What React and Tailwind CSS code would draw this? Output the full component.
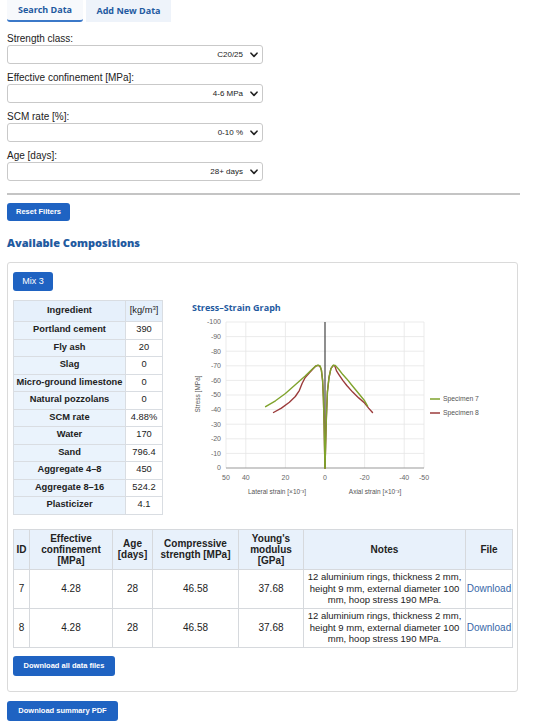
import React from "react";

const BLUE = "#1f63c2";

function Chevron() {
    return (
        <svg width="8" height="6" viewBox="0 0 8 6" className="ml-[7px]">
            <path d="M1 1.2 L4 4.4 L7 1.2" fill="none" stroke="#222" strokeWidth="1.6" strokeLinecap="round" strokeLinejoin="round" />
        </svg>
    );
}

function FilterSelect({ label, value }) {
    return (
        <div className="mb-[7px]">
            <div className="h-[13px] text-[10px] leading-[13px] text-[#222]">{label}</div>
            <div className="flex h-[19px] w-[256px] items-center justify-end rounded-[3px] border border-[#c9c9c9] bg-white pr-[4px] text-[8px] text-[#222]">
                <span>{value}</span>
                <Chevron />
            </div>
        </div>
    );
}

const ingredients = [
    ["Portland cement", "390"],
    ["Fly ash", "20"],
    ["Slag", "0"],
    ["Micro-ground limestone", "0"],
    ["Natural pozzolans", "0"],
    ["SCM rate", "4.88%"],
    ["Water", "170"],
    ["Sand", "796.4"],
    ["Aggregate 4–8", "450"],
    ["Aggregate 8–16", "524.2"],
    ["Plasticizer", "4.1"],
];

const results = [
    { id: "7", conf: "4.28", age: "28", fc: "46.58", e: "37.68" },
    { id: "8", conf: "4.28", age: "28", fc: "46.58", e: "37.68" },
];

// chart mapping (svg coords)
const X = (v) => 140 - 1.98 * v;
const Y = (s) => 154 - 1.46 * s;
const pts = (arr) => arr.map(([v, s]) => `${X(v).toFixed(1)},${Y(s).toFixed(1)}`).join(" ");

const greenLat = [[30, 42], [25, 46], [20, 51], [15, 57], [10, 63], [7, 67], [5, 69.5], [3.5, 70.5], [2.5, 70], [1.8, 67], [1.2, 60], [0.8, 48], [0.45, 30], [0.2, 12], [0, 0]];
const redLat = [[26, 38], [22, 41], [18, 45], [15, 49], [13, 53], [11.5, 58], [10, 62], [8, 65], [6, 68], [4.5, 70], [3.5, 70.3], [2.5, 69.5], [1.8, 67], [1.2, 60], [0.8, 48], [0.45, 30], [0.2, 12], [0, 0]];
const greenAx = [[0, 0], [-0.3, 15], [-0.7, 35], [-1.2, 52], [-2, 62], [-3, 68], [-4.2, 70.5], [-5.2, 70.3], [-7, 67.5], [-9, 64], [-11, 61], [-14, 56], [-17, 51], [-20, 46], [-21.5, 42.5]];
const redAx = [[0, 0], [-0.3, 15], [-0.7, 35], [-1.2, 52], [-2, 62], [-3, 68], [-4.2, 70.3], [-5, 69.8], [-5.8, 66.5], [-7, 64], [-9, 60], [-11, 56.5], [-14, 52], [-17, 48], [-20, 44.5], [-22, 41], [-24, 38]];

function StressStrainChart() {
    const grid = "#e6e6e6";
    const tick = "#666";
    return (
        <svg width="320" height="190" viewBox="0 0 320 190" style={{ fontFamily: "'Liberation Sans', Arial, sans-serif" }}>
            {[10, 20, 30, 40, 50, 60, 70, 80, 90, 100].map((s) => (
                <line key={s} x1={X(50)} x2={X(-50)} y1={Y(s)} y2={Y(s)} stroke={grid} strokeWidth="0.8" />
            ))}
            {[50, 40, 20, -20, -40, -50].map((v) => (
                <line key={v} x1={X(v)} x2={X(v)} y1={Y(100)} y2={Y(0)} stroke={grid} strokeWidth="0.8" />
            ))}
            <line x1={X(50)} x2={X(-50)} y1={Y(0)} y2={Y(0)} stroke="#999" strokeWidth="1" />
            <line x1={X(0)} x2={X(0)} y1={Y(100)} y2={Y(0)} stroke="#444" strokeWidth="1.2" />
            {[0, 10, 20, 30, 40, 50, 60, 70, 80, 90, 100].map((s) => (
                <text key={s} x={36} y={Y(s) + 2.4} fontSize="7" fill={tick} textAnchor="end">
                    {s === 0 ? "0" : `-${s}`}
                </text>
            ))}
            {[50, 40, 20, 0, -20, -40, -50].map((v) => (
                <text key={v} x={X(v)} y={166} fontSize="7" fill={tick} textAnchor="middle">
                    {v}
                </text>
            ))}
            <text x={92} y={180} fontSize="6.5" fill="#555" textAnchor="middle">Lateral strain [×10⁻³]</text>
            <text x={190} y={180} fontSize="6.5" fill="#555" textAnchor="middle">Axial strain [×10⁻³]</text>
            <text x={15} y={80} fontSize="6.5" fill="#555" textAnchor="middle" transform="rotate(-90 15 80)">Stress [MPa]</text>

            <polyline points={pts(redLat)} fill="none" stroke="#9b3b3b" strokeWidth="1.4" strokeLinejoin="round" strokeLinecap="round" />
            <polyline points={pts(redAx)} fill="none" stroke="#9b3b3b" strokeWidth="1.4" strokeLinejoin="round" strokeLinecap="round" />
            <polyline points={pts(greenLat)} fill="none" stroke="#7fa32c" strokeWidth="1.4" strokeLinejoin="round" strokeLinecap="round" />
            <polyline points={pts(greenAx)} fill="none" stroke="#7fa32c" strokeWidth="1.4" strokeLinejoin="round" strokeLinecap="round" />

            <line x1={245} x2={255} y1={85} y2={85} stroke="#7fa32c" strokeWidth="1.5" />
            <text x={258} y={87.3} fontSize="6.8" fill="#555">Specimen 7</text>
            <line x1={245} x2={255} y1={99} y2={99} stroke="#9b3b3b" strokeWidth="1.5" />
            <text x={258} y={101.3} fontSize="6.8" fill="#555">Specimen 8</text>
        </svg>
    );
}

function BlueButton({ children, className = "" }) {
    return (
        <button
            className={`flex items-center justify-center rounded-[3px] font-bold text-white ${className}`}
            style={{ backgroundColor: BLUE }}
        >
            {children}
        </button>
    );
}

export default function App() {
    const heading = { fontFamily: "'Open Sans', 'Noto Sans', sans-serif" };
    return (
        <div className="min-h-screen w-[545px] bg-white px-[7px] text-[#222]" style={{ fontFamily: "'Liberation Sans', Arial, sans-serif" }}>
            {/* tabs */}
            <div className="flex h-[22px] gap-[3px] pl-0" style={heading}>
                <div className="flex w-[76px] items-center justify-center rounded-b-[3px] border-b-2 bg-[#f7f9fc] text-[9px] font-bold" style={{ borderColor: "#3b78c8", color: "#1f5aa0" }}>
                    Search Data
                </div>
                <div className="flex w-[85px] items-center justify-center bg-[#eef3fa] text-[9px] font-bold" style={{ color: "#1f5aa0" }}>
                    Add New Data
                </div>
            </div>

            <div className="mt-[10px]">
                <FilterSelect label="Strength class:" value="C20/25" />
                <FilterSelect label="Effective confinement [MPa]:" value="4-6 MPa" />
                <FilterSelect label="SCM rate [%]:" value="0-10 %" />
                <FilterSelect label="Age [days]:" value="28+ days" />
            </div>

            <div className="mt-[12px] h-[2px] w-[513px] bg-[#c4c4c4]" />

            <BlueButton className="mt-[8px] h-[18px] w-[63px] text-[7.5px]">Reset Filters</BlueButton>

            <h2 className="mt-[15px] h-[14px] text-[11px] font-extrabold leading-[14px]" style={{ ...heading, color: "#1f5aa0" }}>
                Available Compositions
            </h2>

            {/* card */}
            <div className="mt-[12px] w-[511px] rounded-[3px] border border-[#dadada] px-[5px] pb-[15px] pt-[9px]">
                <BlueButton className="h-[19px] w-[40px] text-[9px] font-normal">Mix 3</BlueButton>

                <div className="mt-[9px] flex">
                    <table className="w-[150px] shrink-0 border-collapse text-[9.3px]">
                        <thead>
                            <tr className="h-[21px] bg-[#e6f0fb]">
                                <th className="w-[112px] border border-[#d9dde2] font-bold">Ingredient</th>
                                <th className="border border-[#d9dde2] font-normal">
                                    [kg/m<sup className="text-[6px]">3</sup>]
                                </th>
                            </tr>
                        </thead>
                        <tbody>
                            {ingredients.map(([name, val]) => (
                                <tr key={name} className="h-[17.5px]">
                                    <td className="border border-[#d9dde2] bg-[#eaf3fc] text-center font-bold">{name}</td>
                                    <td className="border border-[#d9dde2] text-center">{val}</td>
                                </tr>
                            ))}
                        </tbody>
                    </table>

                    <div className="ml-[22px] flex shrink-0 flex-col">
                        <div className="mt-[2px] h-[11px] text-[9px] font-bold leading-[11px]" style={{ ...heading, color: "#1f5aa0", marginLeft: 7 }}>
                            Stress–Strain Graph
                        </div>
                        <div className="mt-[1px]">
                            <StressStrainChart />
                        </div>
                    </div>
                </div>

                <table className="mt-[14px] w-[500px] border-collapse text-[10px]">
                    <thead>
                        <tr className="h-[40px] bg-[#e8f1fb] leading-[11px]">
                            <th className="w-[16px] border border-[#d6d9dd] font-bold">ID</th>
                            <th className="w-[83px] border border-[#d6d9dd] font-bold">Effective<br />confinement<br />[MPa]</th>
                            <th className="w-[40px] border border-[#d6d9dd] font-bold">Age<br />[days]</th>
                            <th className="w-[86px] border border-[#d6d9dd] font-bold">Compressive<br />strength [MPa]</th>
                            <th className="w-[65px] border border-[#d6d9dd] font-bold">Young's<br />modulus<br />[GPa]</th>
                            <th className="w-[162px] border border-[#d6d9dd] font-bold">Notes</th>
                            <th className="border border-[#d6d9dd] font-bold">File</th>
                        </tr>
                    </thead>
                    <tbody>
                        {results.map((r) => (
                            <tr key={r.id} className="h-[39px]">
                                <td className="border border-[#d6d9dd] text-center">{r.id}</td>
                                <td className="border border-[#d6d9dd] text-center">{r.conf}</td>
                                <td className="border border-[#d6d9dd] text-center">{r.age}</td>
                                <td className="border border-[#d6d9dd] text-center">{r.fc}</td>
                                <td className="border border-[#d6d9dd] text-center">{r.e}</td>
                                <td className="border border-[#d6d9dd] px-[2px] text-center text-[9.5px] leading-[11.5px]">
                                    12 aluminium rings, thickness 2 mm, height 9 mm, external diameter 100 mm, hoop stress 190 MPa.
                                </td>
                                <td className="border border-[#d6d9dd] text-center text-[#3767a8]">Download</td>
                            </tr>
                        ))}
                    </tbody>
                </table>

                <BlueButton className="mt-[8px] h-[20px] w-[102px] text-[7.5px]">Download all data files</BlueButton>
            </div>

            <BlueButton className="mt-[9px] h-[20px] w-[111px] text-[7.5px]">Download summary PDF</BlueButton>
        </div>
    );
}
